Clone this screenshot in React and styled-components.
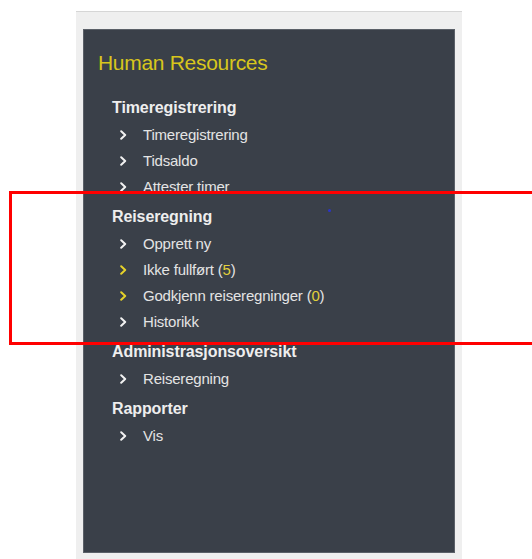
import styled, { createGlobalStyle } from "styled-components";

const GlobalStyle = createGlobalStyle`
  html, body {
    margin: 0;
    padding: 0;
    background: #ffffff;
    overflow: hidden;
  }
  body {
    font-family: "Liberation Sans", Arial, sans-serif;
  }
`;

const menu = [
  {
    title: "Timeregistrering",
    items: [
      { label: "Timeregistrering" },
      { label: "Tidsaldo" },
      { label: "Attester timer" },
    ],
  },
  {
    title: "Reiseregning",
    items: [
      { label: "Opprett ny" },
      { label: "Ikke fullført", count: 5, highlight: true },
      { label: "Godkjenn reiseregninger", count: 0, highlight: true },
      { label: "Historikk" },
    ],
  },
  {
    title: "Administrasjonsoversikt",
    items: [{ label: "Reiseregning" }],
  },
  {
    title: "Rapporter",
    items: [{ label: "Vis" }],
  },
];

function Chevron({ highlight }) {
  return (
    <ChevronIcon width="7" height="10" viewBox="0 0 7 10" $highlight={highlight}>
      <path d="M1.2 1.2 L5.2 5 L1.2 8.8" />
    </ChevronIcon>
  );
}

export default function App() {
  return (
    <>
      <GlobalStyle />
      <Page>
        <Frame>
          <Panel>
            <Heading>Human Resources</Heading>
            <Groups>
              {menu.map((group) => (
                <Group key={group.title}>
                  <GroupTitle>{group.title}</GroupTitle>
                  {group.items.map((item) => (
                    <Item key={item.label}>
                      <Chevron highlight={item.highlight} />
                      <span>
                        {item.label}
                        {item.count !== undefined && (
                          <>
                            {" ("}
                            <Count>{item.count}</Count>
                            {")"}
                          </>
                        )}
                      </span>
                    </Item>
                  ))}
                </Group>
              ))}
            </Groups>
            <Dot />
          </Panel>
        </Frame>
        <Marker />
      </Page>
    </>
  );
}

const Page = styled.div`
  position: relative;
  width: 532px;
  height: 559px;
  overflow: hidden;
  padding-top: 11px;
  box-sizing: border-box;
`;

const Frame = styled.div`
  margin-left: 76px;
  width: 386px;
  height: 560px;
  box-sizing: border-box;
  background: #efefef;
  border-top: 1px solid #d6d6d6;
  padding: 17px 7px 0 7px;
`;

const Panel = styled.div`
  position: relative;
  height: 524px;
  box-sizing: border-box;
  background: #3a4049;
  border: 1px solid #5b6068;
  padding: 20px 14px 0 14px;
`;

const Heading = styled.div`
  font-size: 21px;
  line-height: 26px;
  color: #d8c61c;
  letter-spacing: -0.3px;
`;

const Groups = styled.div`
  margin-top: 19px;
  padding-left: 14px;
  display: flex;
  flex-direction: column;
  gap: 5px;
`;

const Group = styled.div`
  display: flex;
  flex-direction: column;
`;

const GroupTitle = styled.div`
  font-size: 16px;
  font-weight: bold;
  line-height: 26px;
  color: #eeeeee;
  letter-spacing: -0.1px;
`;

const Item = styled.div`
  display: flex;
  align-items: center;
  padding-left: 8px;
  gap: 16px;
  height: 26px;
  font-size: 15px;
  color: #e4e4e4;
  letter-spacing: -0.2px;
`;

const ChevronIcon = styled.svg`
  flex: none;
  margin-top: 1px;
  fill: none;
  stroke: ${(p) => (p.$highlight ? "#e6d22a" : "#f2f2f2")};
  stroke-width: 2;
  stroke-linecap: round;
  stroke-linejoin: round;
`;

const Count = styled.span`
  color: #e2d03a;
`;

const Dot = styled.span`
  position: absolute;
  left: 244px;
  top: 179px;
  width: 3px;
  height: 3px;
  border-radius: 50%;
  background: #2b34c8;
`;

const Marker = styled.div`
  position: absolute;
  left: 9px;
  top: 191px;
  width: 600px;
  height: 154px;
  box-sizing: border-box;
  border: 3px solid #ff0000;
  pointer-events: none;
`;
